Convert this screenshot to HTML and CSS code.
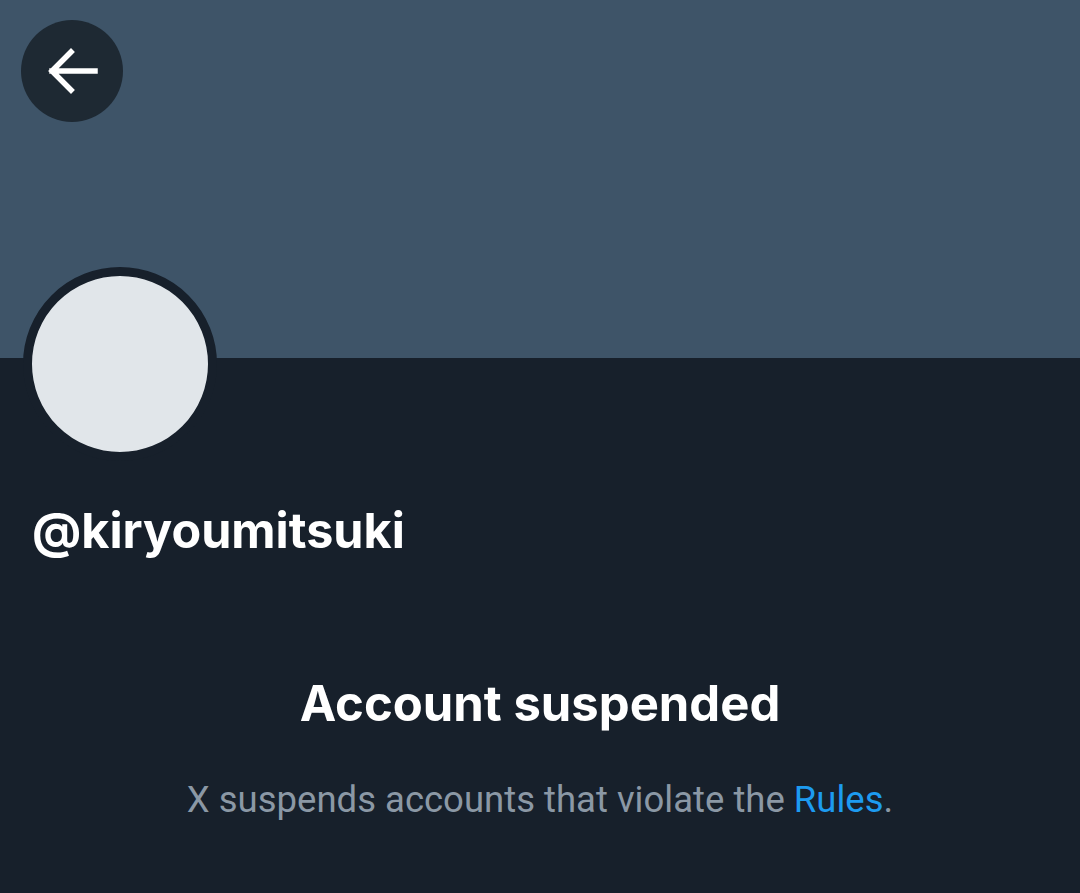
FILE: index.html
```html
<!DOCTYPE html>
<html>
<head>
<meta charset="utf-8">
<link rel="stylesheet" href="styles.css">
</head>
<body>
<div class="page">
  <div class="banner">
    <button class="back" aria-label="Back">
      <svg viewBox="0 0 102 102" width="102" height="102"><path d="M31 51H74M50 32L31 51L50 70" fill="none" stroke="#fff" stroke-width="5.5" stroke-linecap="square" stroke-linejoin="miter"/></svg>
    </button>
  </div>
  <div class="profile">
    <div class="avatar"></div>
    <div class="handle">@kiryoumitsuki</div>
  </div>
  <div class="notice">
    <h1 class="title">Account suspended</h1>
    <p class="desc">X suspends accounts that violate the <a class="link" href="#">Rules</a>.</p>
  </div>
</div>
</body>
</html>
```
FILE: styles.css
```css
html, body { margin: 0; padding: 0; }
body { background: #17202b; font-family: Inter, "Liberation Sans", sans-serif; }
.page { width: 1080px; height: 893px; overflow: hidden; background: #17202b; }
.banner { height: 358px; background: #3e5468; padding: 20px 0 0 21px; box-sizing: border-box; }
.back { width: 102px; height: 102px; border-radius: 50%; border: none; background: #1e2933; display: flex; align-items: center; justify-content: center; padding: 0; }
.profile { padding-left: 23px; }
.avatar { width: 176px; height: 176px; border-radius: 50%; background: #e1e6ea; border: 9px solid #17202b; margin-top: -91px; }
.handle { color: #fff; font-weight: 700; font-size: 48.5px; line-height: 54px; margin-top: 43px; padding-left: 9px; }
.notice { text-align: center; margin-top: 118px; }
.title { margin: 0; color: #fff; font-size: 49px; font-weight: 700; line-height: 56px; }
.desc { margin: 48px 0 0; color: #8b98a5; font-family: Roboto, sans-serif; font-size: 36.5px; line-height: 40px; }
.link { color: #1d9bf0; text-decoration: none; }
```
